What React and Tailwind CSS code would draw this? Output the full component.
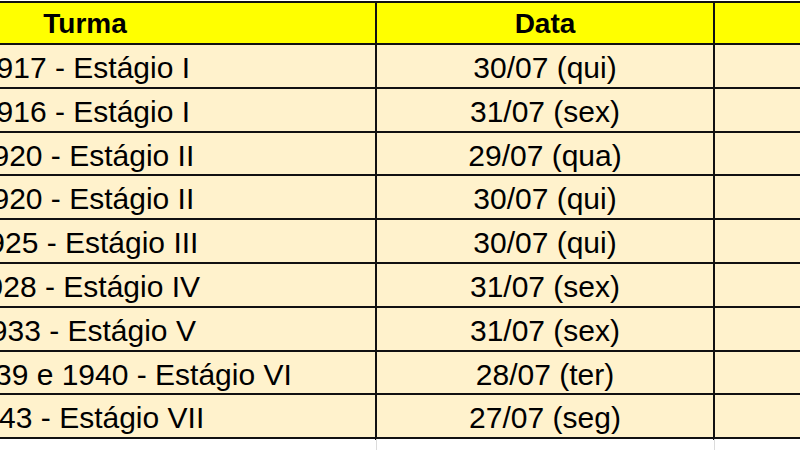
import React from 'react';

const rows = [
  { turma: '1917 - Estágio I', data: '30/07 (qui)' },
  { turma: '1916 - Estágio I', data: '31/07 (sex)' },
  { turma: '1920 - Estágio II', data: '29/07 (qua)' },
  { turma: '1920 - Estágio II', data: '30/07 (qui)' },
  { turma: '1925 - Estágio III', data: '30/07 (qui)' },
  { turma: '1928 - Estágio IV', data: '31/07 (sex)' },
  { turma: '1933 - Estágio V', data: '31/07 (sex)' },
  { turma: '1938, 1939 e 1940 - Estágio VI', data: '28/07 (ter)' },
  { turma: '1943 - Estágio VII', data: '27/07 (seg)' },
];

const cols = 'grid grid-cols-[582px_338px_300px]';

const App = () => {
  return (
    <div className="w-[800px] h-[450px] overflow-hidden bg-white relative font-['Liberation_Sans',Arial,sans-serif] text-black">
      <div className="ml-[-205px] mt-[1px] w-[1220px]">
        <div className={`${cols} h-[44px] bg-[#ffff00] border-y-2 border-[#111] text-[28px] font-bold`}>
          <div className="flex items-center justify-center border-r-2 border-[#111]">Turma</div>
          <div className="flex items-center justify-center border-r-2 border-[#111]">Data</div>
          <div />
        </div>
        {rows.map((row, i) => (
          <div
            key={i}
            className={`${cols} h-[43.8px] bg-[#fff2cc] border-b-2 border-[#111] text-[30px]`}
          >
            <div className="flex items-center justify-center border-r-2 border-[#111] whitespace-nowrap">
              {row.turma}
            </div>
            <div className="flex items-center justify-center border-r-2 border-[#111]">{row.data}</div>
            <div />
          </div>
        ))}
        <div className={`${cols} h-[20px]`}>
          <div className="border-r border-[#dcdcdc]" />
          <div className="border-r border-[#dcdcdc]" />
          <div />
        </div>
      </div>
    </div>
  );
};

export default App;
